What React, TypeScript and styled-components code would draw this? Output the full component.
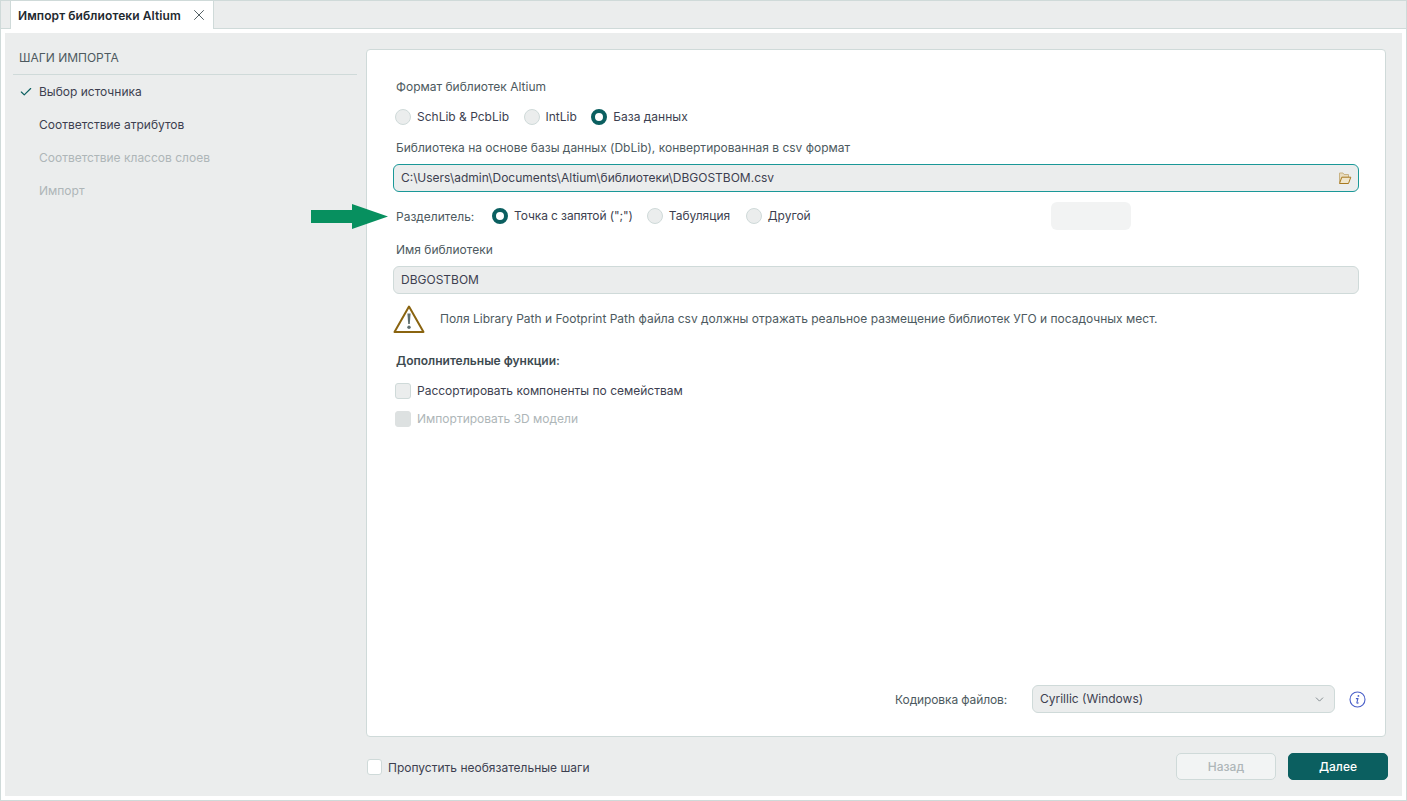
import React from "react";
import styled, { createGlobalStyle } from "styled-components";
import { ChevronDown, Check, X } from "lucide-react";

const GlobalStyle = createGlobalStyle`
  html, body {
    margin: 0;
    padding: 0;
    background: #fff;
  }
  body {
    font-family: Inter, "Liberation Sans", sans-serif;
    font-size: 12px;
    color: #3d4a50;
  }
`;

const Window = styled.div`
  position: relative;
  width: 1407px;
  height: 801px;
  box-sizing: border-box;
  border: 1px solid #cfdad9;
  border-top: 0;
  display: flex;
  flex-direction: column;
  background: #fff;
  overflow: hidden;
`;

const TabBar = styled.div`
  height: 29px;
  flex: none;
  box-sizing: border-box;
  padding: 1px 0 0 9px;
  background: #ebeded;
  border-top: 1px solid #cfdad9;
  border-bottom: 1px solid #cfdad9;
  display: flex;
`;

const Tab = styled.div`
  width: 204px;
  height: 28px;
  box-sizing: border-box;
  margin-top: -1px;
  padding: 0 5px 0 7px;
  background: #fff;
  border-left: 1px solid #cfdad9;
  border-right: 1px solid #cfdad9;
  display: flex;
  align-items: center;
  justify-content: space-between;
  font-weight: 600;
  letter-spacing: 0.08px;
  color: #1f2a30;
`;

const Body = styled.div`
  flex: 1;
  margin: 4px;
  background: #ebeded;
  display: flex;
  min-height: 0;
`;

const Sidebar = styled.aside`
  width: 361px;
  flex: none;
  box-sizing: border-box;
  padding: 17px 9px 0 8px;
`;

const SideTitle = styled.div`
  height: 25px;
  box-sizing: border-box;
  padding-left: 6px;
  border-bottom: 1px solid #cfdad9;
  color: #4d5a60;
  line-height: 16px;
`;

const Step = styled.div<{ $disabled?: boolean }>`
  height: 33px;
  display: flex;
  align-items: center;
  padding-left: 26px;
  position: relative;
  color: ${(p) => (p.$disabled ? "#aeb6b8" : "#3d3f50")};
`;

const StepCheck = styled.span`
  position: absolute;
  left: 6px;
  top: 10px;
  display: flex;
  color: #0b5f60;
`;

const Main = styled.main`
  flex: 1;
  display: flex;
  flex-direction: column;
  padding: 16px 14px 15px 0;
  min-width: 0;
`;

const Card = styled.section`
  flex: 1;
  box-sizing: border-box;
  margin-right: 2px;
  background: #fff;
  border: 1px solid #cfdad9;
  border-radius: 4px;
  padding: 29px 26px 23px 26px;
  display: flex;
  flex-direction: column;
`;

const Label = styled.div<{ $top?: number }>`
  height: 16px;
  line-height: 16px;
  margin-top: ${(p) => p.$top ?? 0}px;
  padding-left: 3px;
  color: #4d5a60;
`;

const RadioRow = styled.div`
  display: flex;
  align-items: center;
  height: 20px;
  margin-top: 12px;
  padding-left: 2px;
`;

const RadioItem = styled.label<{ $after?: number; $tight?: boolean }>`
  display: flex;
  align-items: center;
  gap: 6px;
  margin-right: ${(p) => p.$after ?? 14.5}px;
  line-height: 14px;
  letter-spacing: ${(p) => (p.$tight ? "-0.1px" : "normal")};
  color: #3d3f50;
`;

const RadioDot = styled.span<{ $on?: boolean }>`
  width: 16px;
  height: 16px;
  box-sizing: border-box;
  border-radius: 50%;
  background: ${(p) => (p.$on ? "#fff" : "#ebeded")};
  border: ${(p) => (p.$on ? "4px solid #0b5f60" : "1px solid #cfdad9")};
`;

const Field = styled.div<{ $active?: boolean; $top?: number }>`
  height: 28px;
  flex: none;
  box-sizing: border-box;
  margin-top: ${(p) => p.$top ?? 0}px;
  border-radius: 6px;
  background: #ebeded;
  border: 1px solid ${(p) => (p.$active ? "#1a9898" : "#cfdad9")};
  display: flex;
  align-items: center;
  justify-content: space-between;
  padding: 0 6px 0 7px;
  line-height: 14px;
  color: #3d3f50;
`;

const SeparatorRow = styled(RadioRow)`
  margin-top: 14px;
  padding-left: 3px;
  position: relative;
`;

const SeparatorLabel = styled.span`
  width: 96px;
  flex: none;
  color: #4d5a60;
`;

const CustomValue = styled.div`
  position: absolute;
  left: 658px;
  top: -4px;
  width: 80px;
  height: 28px;
  border-radius: 6px;
  background: #f2f3f3;
`;

const Notice = styled.div`
  display: flex;
  align-items: center;
  height: 30px;
  margin-top: 9px;
  gap: 15px;
  color: #4d5a60;
`;

const SectionTitle = styled.div`
  margin-top: 20px;
  height: 16px;
  line-height: 16px;
  padding-left: 3px;
  font-weight: 600;
  color: #3d4a50;
`;

const CheckRow = styled.label<{ $disabled?: boolean; $top?: number }>`
  display: flex;
  align-items: center;
  gap: 6px;
  height: 16px;
  margin-top: ${(p) => p.$top ?? 0}px;
  padding-left: 2px;
  line-height: 14px;
  color: ${(p) => (p.$disabled ? "#aeb6b8" : "#3d3f50")};
`;

const SkipRow = styled(CheckRow)`
  padding-left: 1px;
  line-height: 15px;
`;

const Box = styled.span<{ $disabled?: boolean }>`
  width: 16px;
  height: 16px;
  box-sizing: border-box;
  border-radius: 3px;
  background: ${(p) => (p.$disabled ? "#dde1e1" : "#ebeded")};
  border: 1px solid ${(p) => (p.$disabled ? "#dde1e1" : "#cfdad9")};
`;

const SkipBox = styled.span`
  width: 15px;
  height: 16px;
  box-sizing: border-box;
  border-radius: 3px;
  background: #fff;
  border: 1px solid #cfdad9;
`;

const Encoding = styled.div`
  margin-top: auto;
  margin-right: -7px;
  display: flex;
  align-items: center;
  justify-content: flex-end;
  color: #4d5a60;
`;

const EncodingLabel = styled.span`
  margin-right: 25px;
  letter-spacing: -0.12px;
`;

const Select = styled.div`
  width: 303px;
  height: 28px;
  box-sizing: border-box;
  border-radius: 6px;
  background: #ebeded;
  border: 1px solid #cfdad9;
  display: flex;
  align-items: center;
  justify-content: space-between;
  padding: 0 8px 0 7px;
  line-height: 14px;
  color: #3d3f50;
`;

const InfoWrap = styled.span`
  display: flex;
  margin-left: 14px;
`;

const Footer = styled.footer`
  display: flex;
  align-items: center;
  height: 28px;
  margin-top: 16px;
`;

const Spacer = styled.div`
  flex: 1;
`;

const Button = styled.button<{ $primary?: boolean }>`
  width: 100px;
  height: 27px;
  box-sizing: border-box;
  align-self: flex-start;
  margin-left: 12px;
  padding: 0;
  font: 500 12px Inter, "Liberation Sans", sans-serif;
  border-radius: 5px;
  background: ${(p) => (p.$primary ? "#0b5f60" : "#f2f4f4")};
  border: 1px solid ${(p) => (p.$primary ? "#0b5f60" : "#cfdad9")};
  color: ${(p) => (p.$primary ? "#fff" : "#aeb6b8")};
`;

const Arrow = styled.svg`
  position: absolute;
  left: 310px;
  top: 204px;
`;

const FolderIcon = () => (
  <svg width="14" height="14" viewBox="0 0 14 14" fill="none">
    <path d="M1.5 11.5V2H5L6 3.5H10.5V6" stroke="#c9b384" fill="#e8dcc0" />
    <path d="M1.5 12.5H10.5L12.8 6.2H3.8Z" fill="#f0e6cc" stroke="#a8791f" />
  </svg>
);

const WarningIcon = () => (
  <svg width="32" height="30" viewBox="0 0 32 30" fill="none">
    <path d="M16 3.5L30.5 29H1.5Z" stroke="#8a6410" strokeWidth="2" strokeLinejoin="round" />
    <path d="M14.4 10.5H17.6L16.8 21H15.2Z" fill="#5f6f70" />
    <circle cx="16" cy="24.2" r="1.7" fill="#5f6f70" />
  </svg>
);

const InfoIcon = () => (
  <svg width="17" height="17" viewBox="0 0 17 17" fill="none">
    <circle cx="8.5" cy="8.5" r="7.5" stroke="#4a5fc8" strokeWidth="1.1" />
    <circle cx="9.4" cy="4.9" r="0.9" fill="#4a5fc8" />
    <path d="M6.9 7.6H8.9L7.9 11.6C7.8 12.2 8.3 12.5 9.6 11.8" stroke="#4a5fc8" strokeWidth="1.1" />
  </svg>
);

export default function App() {
  return (
    <>
      <GlobalStyle />
      <Window>
        <TabBar>
          <Tab>
            Импорт библиотеки Altium
            <X size={18} strokeWidth={1.3} color="#4d5a60" />
          </Tab>
        </TabBar>
        <Body>
          <Sidebar>
            <SideTitle>ШАГИ ИМПОРТА</SideTitle>
            <Step>
              <StepCheck>
                <Check size={14} strokeWidth={2} />
              </StepCheck>
              Выбор источника
            </Step>
            <Step>Соответствие атрибутов</Step>
            <Step $disabled>Соответствие классов слоев</Step>
            <Step $disabled>Импорт</Step>
          </Sidebar>
          <Main>
            <Card>
              <Label>Формат библиотек Altium</Label>
              <RadioRow>
                <RadioItem>
                  <RadioDot />
                  SchLib &amp; PcbLib
                </RadioItem>
                <RadioItem>
                  <RadioDot />
                  IntLib
                </RadioItem>
                <RadioItem>
                  <RadioDot $on />
                  База данных
                </RadioItem>
              </RadioRow>
              <Label $top={13}>
                Библиотека на основе базы данных (DbLib), конвертированная в csv формат
              </Label>
              <Field $active $top={8}>
                C:\Users\admin\Documents\Altium\библиотеки\DBGOSTBOM.csv
                <FolderIcon />
              </Field>
              <SeparatorRow>
                <SeparatorLabel>Разделитель:</SeparatorLabel>
                <RadioItem $after={14} $tight>
                  <RadioDot $on />
                  Точка с запятой (";")
                </RadioItem>
                <RadioItem $after={15.5}>
                  <RadioDot />
                  Табуляция
                </RadioItem>
                <RadioItem>
                  <RadioDot />
                  Другой
                </RadioItem>
                <CustomValue />
              </SeparatorRow>
              <Label $top={16}>Имя библиотеки</Label>
              <Field $top={8}>DBGOSTBOM</Field>
              <Notice>
                <WarningIcon />
                Поля Library Path и Footprint Path файла csv должны отражать реальное размещение библиотек УГО и посадочных мест.
              </Notice>
              <SectionTitle>Дополнительные функции:</SectionTitle>
              <CheckRow $top={14}>
                <Box />
                Рассортировать компоненты по семействам
              </CheckRow>
              <CheckRow $top={12} $disabled>
                <Box $disabled />
                Импортировать 3D модели
              </CheckRow>
              <Encoding>
                <EncodingLabel>Кодировка файлов:</EncodingLabel>
                <Select>
                  Cyrillic (Windows)
                  <ChevronDown size={13} strokeWidth={1.2} color="#4d5a60" />
                </Select>
                <InfoWrap>
                  <InfoIcon />
                </InfoWrap>
              </Encoding>
            </Card>
            <Footer>
              <SkipRow>
                <SkipBox />
                Пропустить необязательные шаги
              </SkipRow>
              <Spacer />
              <Button>Назад</Button>
              <Button $primary>Далее</Button>
            </Footer>
          </Main>
        </Body>
        <Arrow width="78" height="26" viewBox="0 0 78 26">
          <path d="M0 6H41V0L77 12.5L41 25V19H0Z" fill="#07905f" />
        </Arrow>
      </Window>
    </>
  );
}
